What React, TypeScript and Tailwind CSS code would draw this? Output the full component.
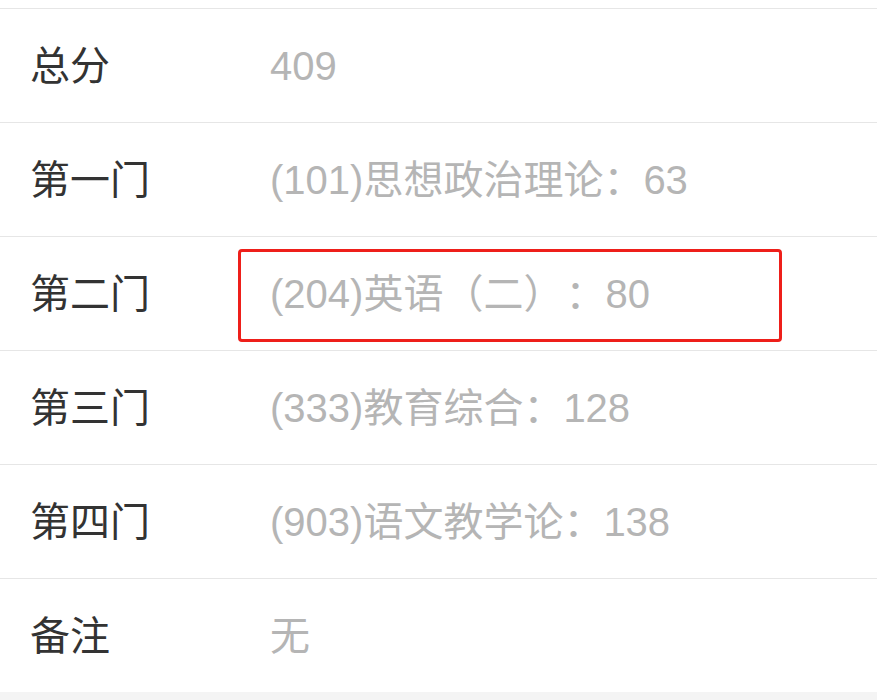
import React from "react";

const rows: [string, React.ReactNode][] = [
  ["总分", "409"],
  ["第一门", "(101)思想政治理论：63"],
  [
    "第二门",
    <>
      (204)英语（二）<span className="ml-[22px]">：80</span>
    </>,
  ],
  ["第三门", "(333)教育综合：128"],
  ["第四门", "(903)语文教学论：138"],
  ["备注", "无"],
];

export default function App() {
  return (
    <div
      className="w-[877px] h-[700px] bg-[#f4f4f4] overflow-hidden"
      style={{ fontFamily: '"Liberation Sans", "Noto Sans CJK SC", sans-serif' }}
    >
      <div className="bg-white pt-[8px] relative">
        {rows.map(([label, value]) => (
          <div
            key={label}
            className="h-[114px] border-t border-[#e6e6e6] flex items-center text-[40px] leading-none"
          >
            <div className="w-[270px] pl-[30px] text-[#333333]">{label}</div>
            <div className="text-[#b5b5b5] whitespace-nowrap">{value}</div>
          </div>
        ))}
        <div className="absolute left-[238px] top-[249px] w-[544px] h-[93px] border-[3px] border-[#ee1f1a] rounded-[4px]" />
      </div>
    </div>
  );
}
